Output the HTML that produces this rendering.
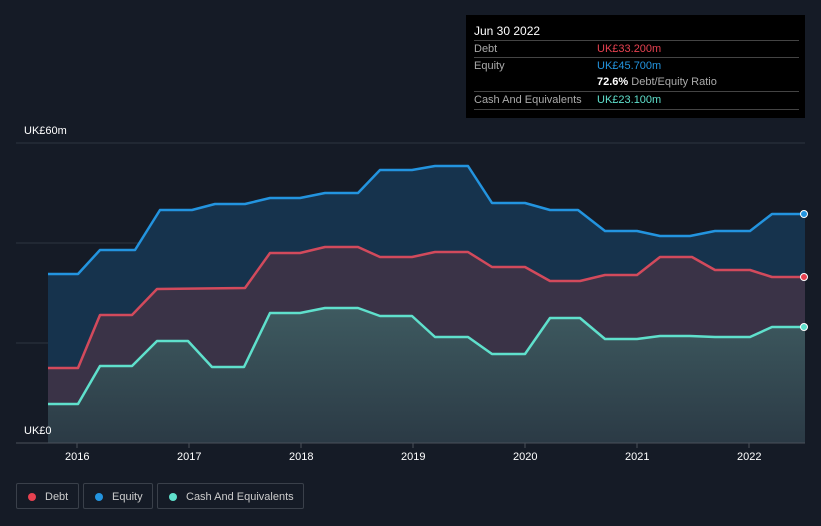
<!DOCTYPE html>
<html><head><meta charset="utf-8"><style>
body{margin:0;width:821px;height:526px;background:#151b26;font-family:"Liberation Sans",sans-serif;overflow:hidden;position:relative}
.tt{position:absolute;left:466px;top:15px;width:339px;height:103px;background:#000;color:#fff;font-size:11px}
.tt .r{position:absolute;left:8px;right:6px;border-top:1px solid #444;height:17px;line-height:17px;color:#aaa}
.tt .v{position:absolute;left:123px}
.leg{position:absolute;top:483px;height:26px;border:1px solid #3a404a;border-radius:2px;color:#ccc;font-size:11px;line-height:26px;box-sizing:border-box}
.leg i{position:absolute;left:11px;top:9px;width:8px;height:8px;border-radius:50%}
.leg span{position:absolute;left:28px}
.ax{position:absolute;color:#fff;font-size:11px}
</style></head><body>
<svg width="821" height="526" style="position:absolute;left:0;top:0">
<defs><linearGradient id="cg" x1="0" y1="0" x2="0" y2="1"><stop offset="0" stop-color="#3e5a60"/><stop offset="1" stop-color="#2b3a45"/></linearGradient></defs>
<line x1="16" y1="143" x2="805" y2="143" stroke="#2d3440"/>
<line x1="16" y1="243" x2="805" y2="243" stroke="#2d3440"/>
<line x1="16" y1="343" x2="805" y2="343" stroke="#2d3440"/>
<polygon fill="#16334d" points="48,274 78,274 100,250 135,250 160,210 192,210 215,204 245,204 270,198 300,198 325,193 358,193 380,170 412,170 435,166 468,166 492,203 525,203 550,210 578,210 605,231 637,231 660,236 690,236 715,231 750,231 772,214 805,214 805,443 48,443"/>
<polygon fill="#3a3347" points="48,368 78,368 100,315 132,315 157,289 245,288 270,253 300,253 325,247 358,247 380,257 412,257 435,252 468,252 492,267 525,267 550,281 580,281 605,275 637,275 660,257 692,257 715,270 750,270 772,277 805,277 805,443 48,443"/>
<polygon fill="url(#cg)" points="48,404 78,404 100,366 132,366 157,341 188,341 212,367 244,367 270,313 300,313 325,308 358,308 380,316 412,316 435,337 468,337 492,354 525,354 550,318 580,318 605,339 637,339 660,336 690,336 715,337 750,337 772,327 805,327 805,443 48,443"/>
<g fill="none" stroke-width="2.5" stroke-linejoin="round">
<polyline stroke="#2394df" points="48,274 78,274 100,250 135,250 160,210 192,210 215,204 245,204 270,198 300,198 325,193 358,193 380,170 412,170 435,166 468,166 492,203 525,203 550,210 578,210 605,231 637,231 660,236 690,236 715,231 750,231 772,214 805,214"/>
<polyline stroke="#d24a5c" points="48,368 78,368 100,315 132,315 157,289 245,288 270,253 300,253 325,247 358,247 380,257 412,257 435,252 468,252 492,267 525,267 550,281 580,281 605,275 637,275 660,257 692,257 715,270 750,270 772,277 805,277"/>
<polyline stroke="#5fe0cc" points="48,404 78,404 100,366 132,366 157,341 188,341 212,367 244,367 270,313 300,313 325,308 358,308 380,316 412,316 435,337 468,337 492,354 525,354 550,318 580,318 605,339 637,339 660,336 690,336 715,337 750,337 772,327 805,327"/>
</g>
<circle cx="804" cy="214" r="3.5" fill="#2394df" stroke="#fff"/>
<circle cx="804" cy="277" r="3.5" fill="#e64150" stroke="#fff"/>
<circle cx="804" cy="327" r="3.5" fill="#5fe0cc" stroke="#fff"/>
<line x1="16" y1="443" x2="805" y2="443" stroke="#4a505a"/>
<g stroke="#4a505a"><line x1="77" y1="443" x2="77" y2="448"/><line x1="189" y1="443" x2="189" y2="448"/><line x1="301" y1="443" x2="301" y2="448"/><line x1="413" y1="443" x2="413" y2="448"/><line x1="525" y1="443" x2="525" y2="448"/><line x1="637" y1="443" x2="637" y2="448"/><line x1="749" y1="443" x2="749" y2="448"/></g>
</svg>
<div class="ax" style="left:24px;top:125px">UK£60m</div>
<div class="ax" style="left:24px;top:425px">UK£0</div>
<div class="ax" style="left:65px;top:451px">2016</div>
<div class="ax" style="left:177px;top:451px">2017</div>
<div class="ax" style="left:289px;top:451px">2018</div>
<div class="ax" style="left:401px;top:451px">2019</div>
<div class="ax" style="left:513px;top:451px">2020</div>
<div class="ax" style="left:625px;top:451px">2021</div>
<div class="ax" style="left:737px;top:451px">2022</div>
<div class="tt">
<div style="position:absolute;left:8px;top:9px;font-size:12px">Jun 30 2022</div>
<div class="r" style="top:25px">Debt<span class="v" style="color:#e64150">UK£33.200m</span></div>
<div class="r" style="top:42px">Equity<span class="v" style="color:#2394df">UK£45.700m</span></div>
<div class="r" style="top:59px;border-top:none"><span class="v"><b style="color:#fff">72.6%</b> Debt/Equity Ratio</span></div>
<div class="r" style="top:76px">Cash And Equivalents<span class="v" style="color:#5fe0cc">UK£23.100m</span></div>
<div class="r" style="top:94px;height:0"></div>
</div>
<div class="leg" style="left:16px;width:63px"><i style="background:#e64150"></i><span>Debt</span></div>
<div class="leg" style="left:83px;width:70px"><i style="background:#2394df"></i><span>Equity</span></div>
<div class="leg" style="left:157px;width:147px"><i style="background:#5fe0cc"></i><span>Cash And Equivalents</span></div>
</body></html>
